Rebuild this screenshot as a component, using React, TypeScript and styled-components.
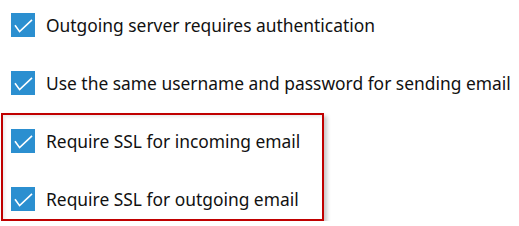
import * as React from "react";
import styled, { createGlobalStyle } from "styled-components";

const GlobalStyle = createGlobalStyle`
    body {
        margin: 0;
        background: #fff;
    }
`;

const Page = styled.div`
    padding: 13px 0 0 1px;
    font-family: "Noto Sans", "Open Sans", sans-serif;
    font-size: 17.4px;
    color: #111;
`;

const List = styled.div`
    display: flex;
    flex-direction: column;
    gap: 34px;
    padding-left: 10px;
`;

const Group = styled.div`
    display: flex;
    flex-direction: column;
    gap: 34px;
    width: 311px;
    margin-top: 18px;
    padding: 14px 0 8px 8px;
    border: 2px solid #c00000;
    box-shadow: 3px 3px 4px rgba(0, 0, 0, 0.22), inset 2px 2px 3px rgba(0, 0, 0, 0.08);
`;

const Row = styled.label`
    display: flex;
    align-items: center;
    gap: 11px;
    height: 24px;
    white-space: nowrap;
`;

const Box = styled.span<{ $checked: boolean }>`
    flex: none;
    display: flex;
    width: 24px;
    height: 24px;
    background: ${(p) => (p.$checked ? "#2b8fd0" : "#fff")};
    border: ${(p) => (p.$checked ? "none" : "2px solid #333")};
    box-sizing: border-box;
`;

const Check = () => (
    <svg width="24" height="24" viewBox="0 0 24 24">
        <path d="M4 12.2 L8.6 18.6 L21 6.8" fill="none" stroke="#fff" strokeWidth="1.6" />
    </svg>
);

const Option = ({ label, checked = true }: { label: string; checked?: boolean }) => (
    <Row>
        <Box $checked={checked}>{checked ? <Check /> : null}</Box>
        <span>{label}</span>
    </Row>
);

export default function App() {
    return (
        <>
            <GlobalStyle />
            <Page>
                <List>
                    <Option label="Outgoing server requires authentication" />
                    <Option label="Use the same username and password for sending email" />
                </List>
                <Group>
                    <Option label="Require SSL for incoming email" />
                    <Option label="Require SSL for outgoing email" />
                </Group>
            </Page>
        </>
    );
}
